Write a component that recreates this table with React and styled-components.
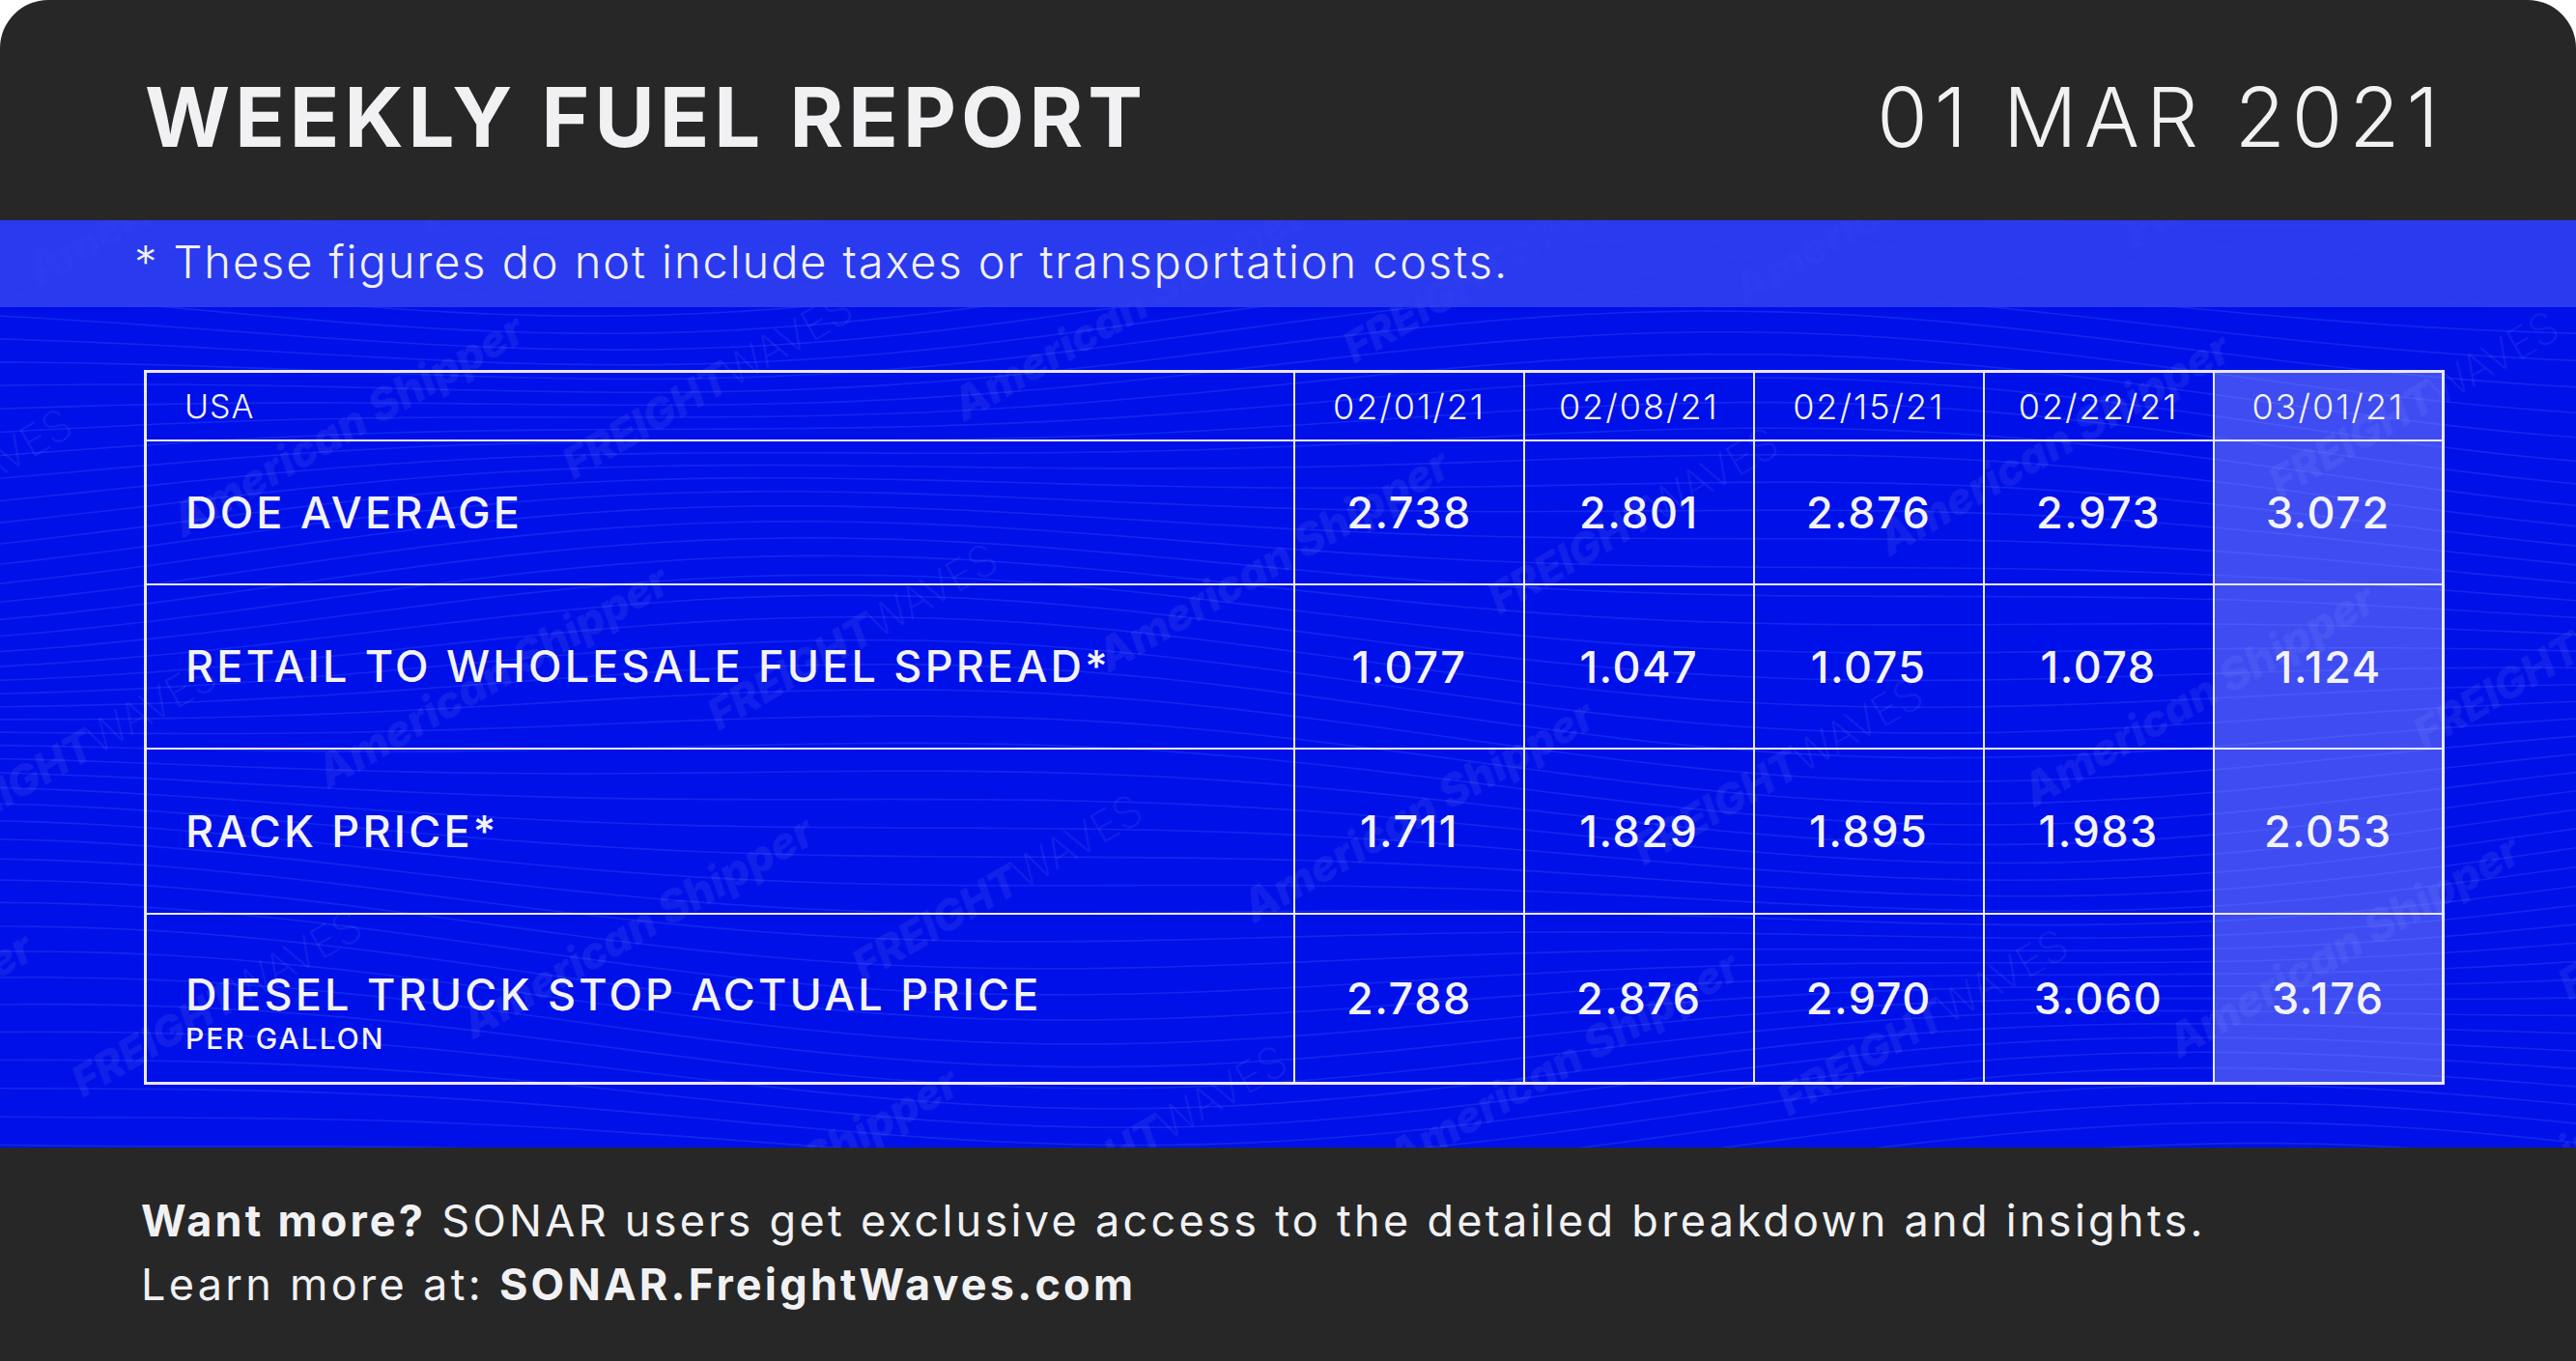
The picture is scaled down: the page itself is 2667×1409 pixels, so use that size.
import React from 'react'
import styled, { createGlobalStyle } from 'styled-components'

const GlobalStyle = createGlobalStyle`
  html, body {
    margin: 0;
    padding: 0;
    background: #ffffff;
  }
  body {
    font-family: Inter, "Noto Sans", "DejaVu Sans", sans-serif;
  }
`

const weeks = ['02/01/21', '02/08/21', '02/15/21', '02/22/21', '03/01/21']

const rows = [
  { label: 'DOE AVERAGE', values: ['2.738', '2.801', '2.876', '2.973', '3.072'], height: 149 },
  { label: 'RETAIL TO WHOLESALE FUEL SPREAD*', values: ['1.077', '1.047', '1.075', '1.078', '1.124'], height: 170 },
  { label: 'RACK PRICE*', values: ['1.711', '1.829', '1.895', '1.983', '2.053'], height: 171 },
  { label: 'DIESEL TRUCK STOP ACTUAL PRICE', sub: 'PER GALLON', values: ['2.788', '2.876', '2.970', '3.060', '3.176'], height: 175 },
]

// contour-ish lines for the background
const waveLines = Array.from({ length: 52 }, (_, i) => {
  let d = ''
  for (let x = -40; x <= 2720; x += 40) {
    const y = -60 + i * 21 + 38 * Math.sin(x / 520 + i * 0.13) + 18 * Math.sin(x / 260 - i * 0.21)
    d += (x === -40 ? 'M' : 'L') + x + ' ' + y.toFixed(1) + ' '
  }
  return d
})

function Background() {
  return (
    <Pattern viewBox="0 0 2667 960" preserveAspectRatio="none">
      <defs>
        <pattern id="marks" width="760" height="300" patternUnits="userSpaceOnUse" patternTransform="rotate(-30)">
          <text x="0" y="80" fontFamily="Inter, sans-serif" fontWeight="800" fontStyle="italic" fontSize="46" fill="#ffffff" fillOpacity="0.07">American Shipper</text>
          <text x="380" y="230" fontFamily="Inter, sans-serif" fontWeight="800" fontStyle="italic" fontSize="44" fill="#ffffff" fillOpacity="0.07">FREIGHT<tspan fontWeight="200" fontStyle="normal">WAVES</tspan></text>
        </pattern>
      </defs>
      {waveLines.map((d, i) => (
        <path key={i} d={d} fill="none" stroke="#3d63ff" strokeOpacity="0.28" strokeWidth="1.6" />
      ))}
      <rect x="0" y="0" width="2667" height="960" fill="url(#marks)" />
    </Pattern>
  )
}

export default function App() {
  return (
    <>
      <GlobalStyle />
      <Card>
        <Header>
          <Title>WEEKLY FUEL REPORT</Title>
          <ReportDate>01 MAR 2021</ReportDate>
        </Header>

        <Canvas>
          <Background />
          <Notice>* These figures do not include taxes or transportation costs.</Notice>
          <TableArea>
            <PriceTable>
              <colgroup>
                <col style={{ width: '50%' }} />
                {weeks.map((w) => <col key={w} />)}
              </colgroup>
              <thead>
                <tr>
                  <RegionCell>USA</RegionCell>
                  {weeks.map((w, i) => (
                    <WeekCell key={w} $current={i === weeks.length - 1}>{w}</WeekCell>
                  ))}
                </tr>
              </thead>
              <tbody>
                {rows.map((row) => (
                  <Row key={row.label} $h={row.height}>
                    <LabelCell>
                      <Label>{row.label}</Label>
                      {row.sub && <SubLabel>{row.sub}</SubLabel>}
                    </LabelCell>
                    {row.values.map((v, i) => (
                      <ValueCell key={i} $current={i === row.values.length - 1}>{v}</ValueCell>
                    ))}
                  </Row>
                ))}
              </tbody>
            </PriceTable>
          </TableArea>
        </Canvas>

        <Footer>
          <FooterLine><strong>Want more?</strong> SONAR users get exclusive access to the detailed breakdown and insights.</FooterLine>
          <FooterLine>Learn more at: <strong>SONAR.FreightWaves.com</strong></FooterLine>
        </Footer>
      </Card>
    </>
  )
}

const Card = styled.div`
  width: 2667px;
  height: 1409px;
  display: flex;
  flex-direction: column;
  overflow: hidden;
  border-radius: 50px 50px 0 0;
  background: #272727;
  color: #f1f1f3;
`

const Header = styled.header`
  height: 228px;
  flex: none;
  display: flex;
  align-items: center;
  justify-content: space-between;
  padding: 14px 142px 0 150px;
  box-sizing: border-box;
`

const Title = styled.h1`
  margin: 0;
  font-size: 85px;
  font-weight: 700;
  letter-spacing: 5px;
  line-height: 1;
`

const ReportDate = styled.div`
  font-size: 85px;
  font-weight: 300;
  letter-spacing: 7px;
  margin-right: -7px;
  line-height: 1;
`

const Canvas = styled.section`
  position: relative;
  height: 960px;
  flex: none;
  background: #0010e8;
`

const Pattern = styled.svg`
  position: absolute;
  inset: 0;
  width: 100%;
  height: 100%;
  pointer-events: none;
`

const Notice = styled.div`
  position: relative;
  height: 90px;
  display: flex;
  align-items: center;
  padding: 0 0 6px 139px;
  box-sizing: border-box;
  background: rgba(48, 64, 238, 0.88);
  font-size: 47px;
  font-weight: 300;
  letter-spacing: 1.9px;
`

const TableArea = styled.div`
  position: relative;
  padding: 65px 136px 0 149px;
`

const PriceTable = styled.table`
  width: 100%;
  border-collapse: collapse;
  table-layout: fixed;
  border: 3px solid #e8e8f4;
`

const Row = styled.tr`
  height: ${(p) => p.$h}px;
`

const cellBase = `
  border: 2px solid #e8e8f4;
  color: #f3f3f6;
  padding: 0;
  vertical-align: middle;
`

const RegionCell = styled.th`
  ${cellBase}
  height: 69px;
  text-align: left;
  padding-left: 39px;
  font-size: 34px;
  font-weight: 300;
  letter-spacing: 1px;
`

const WeekCell = styled.th`
  ${cellBase}
  text-align: center;
  font-size: 36px;
  font-weight: 300;
  letter-spacing: 2px;
  background: ${(p) => (p.$current ? 'rgba(140, 150, 255, 0.45)' : 'transparent')};
`

const LabelCell = styled.td`
  ${cellBase}
  text-align: left;
  padding-left: 40px;
`

const Label = styled.div`
  font-size: 45px;
  font-weight: 500;
  letter-spacing: 3.2px;
  line-height: 1.1;
`

const SubLabel = styled.div`
  font-size: 30px;
  font-weight: 500;
  letter-spacing: 2px;
  line-height: 1;
  margin-top: 6px;
  margin-bottom: -28px;
`

const ValueCell = styled.td`
  ${cellBase}
  text-align: center;
  font-size: 45px;
  font-weight: 500;
  letter-spacing: 1.5px;
  background: ${(p) => (p.$current ? 'rgba(140, 150, 255, 0.45)' : 'transparent')};
`

const Footer = styled.footer`
  flex: 1;
  display: flex;
  flex-direction: column;
  justify-content: center;
  padding: 0 0 4px 146px;
  font-size: 45px;
  font-weight: 400;
  line-height: 66px;
  letter-spacing: 3.3px;

  strong {
    font-weight: 700;
    letter-spacing: 3.2px;
  }
`

const FooterLine = styled.div``
